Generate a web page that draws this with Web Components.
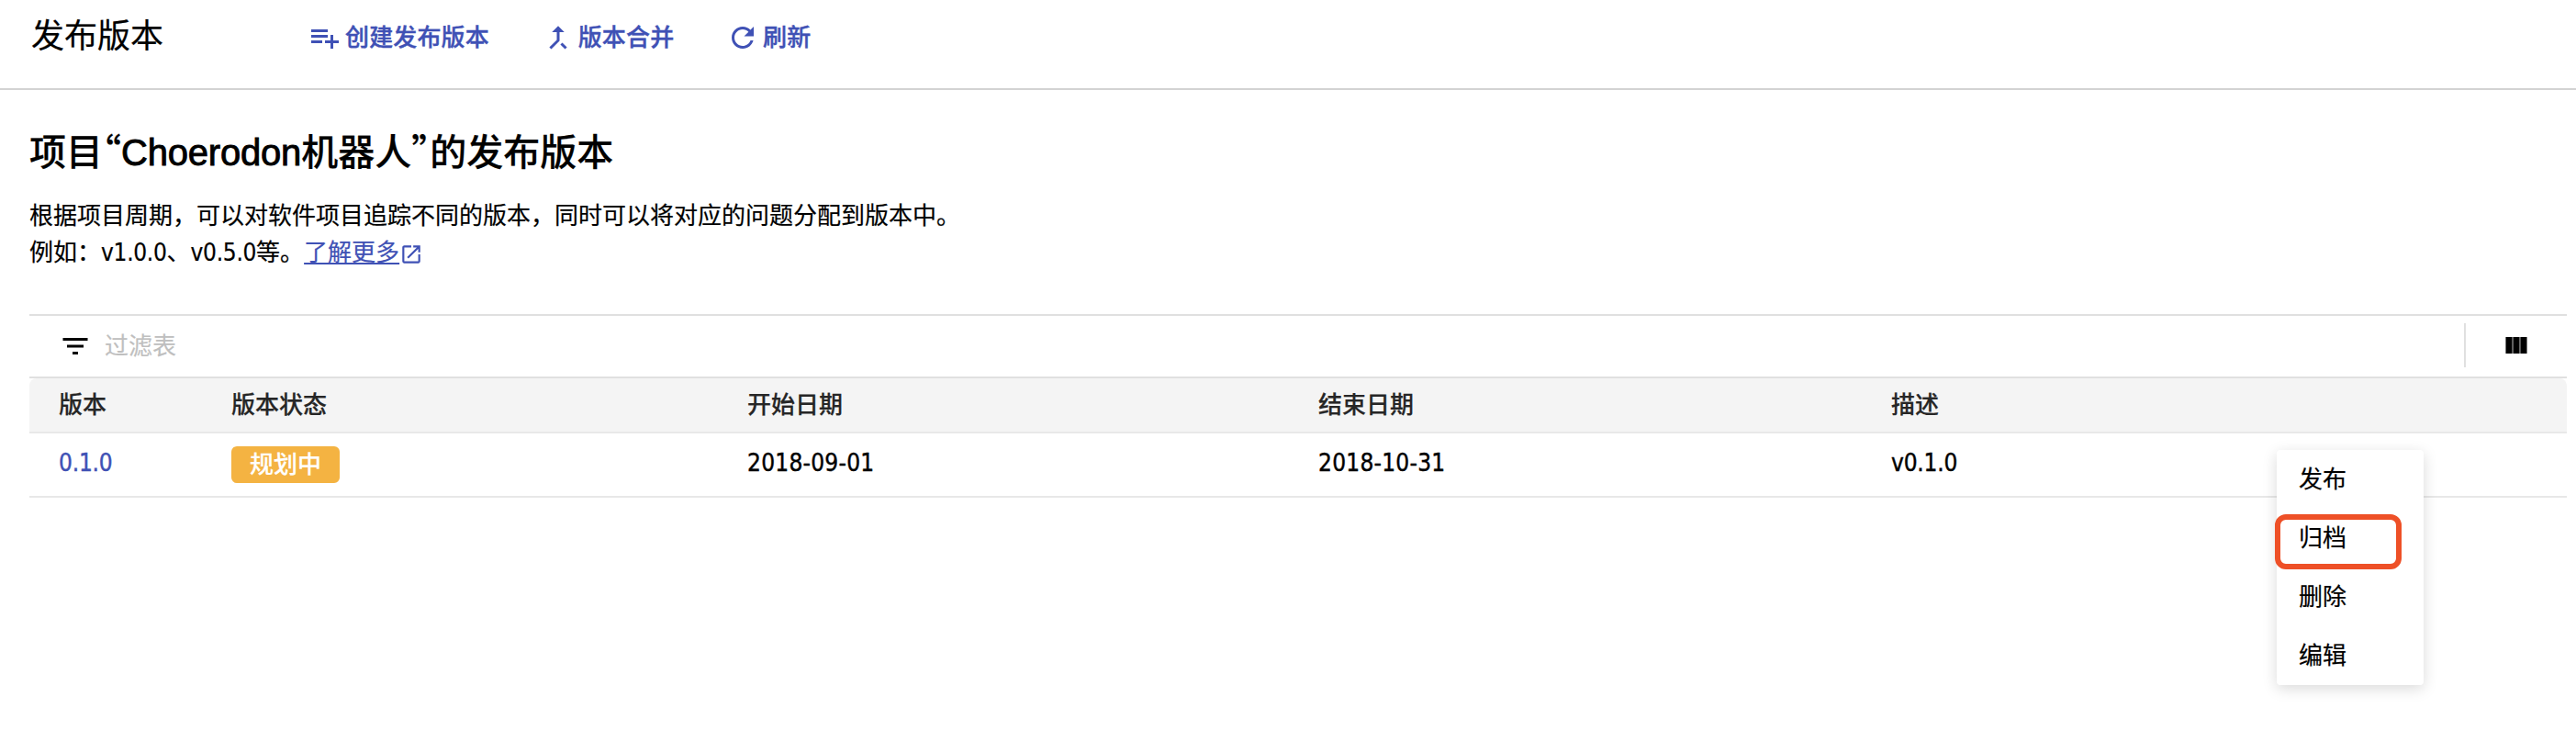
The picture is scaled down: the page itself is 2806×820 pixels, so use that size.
<!DOCTYPE html>
<html lang="zh-CN">
<head>
<meta charset="utf-8">
<title>发布版本</title>
<style>
  body {
    margin: 0; width: 2806px; height: 820px; background: #fff; color: #000; overflow: hidden;
    font-family: "DejaVu Sans Condensed", "Noto Sans CJK SC", sans-serif; font-size: 26px; line-height: 40px;
    -webkit-text-stroke: .2px;
  }
</style>
</head>
<body>
<release-page></release-page>
<script>
const define = (name, html) => customElements.define(name, class extends HTMLElement {
  constructor() {
    super();
    this.attachShadow({ mode: 'open' }).innerHTML = html;
  }
});

const ICONS = {
  playlist: 'M14 10H2v2h12v-2zm0-4H2v2h12V6zm4 8v-4h-2v4h-4v2h4v4h2v-4h4v-2h-4zM2 16h8v-2H2v2z',
  merge: 'M17 20.41L18.41 19 15 15.59 13.59 17 17 20.41zM7.5 8H11v5.59L5.59 19 7 20.41l6-6V8h3.5L12 3.5 7.5 8z',
  refresh: 'M17.65 6.35C16.2 4.9 14.21 4 12 4c-4.42 0-7.99 3.58-7.99 8s3.57 8 7.99 8c3.73 0 6.84-2.55 7.73-6h-2.08c-.82 2.33-3.04 4-5.65 4-3.31 0-6-2.69-6-6s2.69-6 6-6c1.66 0 3.14.69 4.22 1.78L13 11h7V4l-2.35 2.35z',
  open: 'M19 19H5V5h7V3H5c-1.11 0-2 .9-2 2v14c0 1.1.89 2 2 2h14c1.1 0 2-.9 2-2v-7h-2v7zM14 3v2h3.59l-9.83 9.83 1.41 1.41L19 6.41V10h2V3h-7z',
  filter: 'M10 18h4v-2h-4v2zM3 6v2h18V6H3zm3 7h12v-2H6v2z',
  columns: 'M4.3 6h4.8v12H4.3zM9.6 6h4.8v12H9.6zM14.9 6h4.8v12h-4.8z'
};

customElements.define('md-icon', class extends HTMLElement {
  connectedCallback() {
    if (this.shadowRoot) return;
    this.attachShadow({ mode: 'open' }).innerHTML = `
      <style>:host{display:block;flex:none;width:36px;height:36px}svg{display:block;width:100%;height:100%;fill:currentColor}</style>
      <svg viewBox="0 0 24 24"><path d="${ICONS[this.getAttribute('name')]}"/></svg>`;
  }
});

define('tool-button', `
  <style>
    :host{display:flex;align-items:center;gap:4px;height:36px;color:#3f51b5;font-weight:500;white-space:nowrap;-webkit-text-stroke:.4px}
    span{letter-spacing:.15px}
  </style>
  <slot name="icon"></slot><span><slot></slot></span>`);

define('page-header', `
  <style>
    :host{display:flex;box-sizing:border-box;height:98px;padding:0 34px;border-bottom:2px solid #d3d3d3}
    h1{margin:0;width:302px;font-size:36px;font-weight:400;line-height:80px}
    nav{display:flex;gap:56.8px;padding-top:23px}
  </style>
  <h1>发布版本</h1>
  <nav>
    <tool-button><md-icon slot="icon" name="playlist"></md-icon>创建发布版本</tool-button>
    <tool-button><md-icon slot="icon" name="merge"></md-icon>版本合并</tool-button>
    <tool-button><md-icon slot="icon" name="refresh"></md-icon>刷新</tool-button>
  </nav>`);

define('page-intro', `
  <style>
    :host{display:block;height:244px;padding:0 32px;box-sizing:border-box}
    h2{margin:0;padding-top:36px;height:60px;font:500 40px/58px "Noto Sans CJK SC",sans-serif;white-space:nowrap}
    .q{font-feature-settings:"halt"}
    .l{font-family:"Liberation Sans",sans-serif;line-height:0;letter-spacing:-.2px;-webkit-text-stroke:.9px}
    p{margin:21px 0 0;display:flex;flex-direction:column}
    p > span{display:flex;align-items:center;height:40px;white-space:nowrap}
    .n{letter-spacing:-.3px}
    a{display:flex;align-items:center;color:#3f51b5}
    u{text-decoration-thickness:2px;text-underline-offset:2px;text-decoration-skip-ink:none}
    md-icon{width:26px;height:26px;margin-top:3px}
  </style>
  <h2>项目<span class="q">“</span><span class="l">Choerodon</span>机器人<span class="q">”</span>的发布版本</h2>
  <p><span>根据项目周期，可以对软件项目追踪不同的版本，同时可以将对应的问题分配到版本中。</span>
  <span>例如：<span class="n">v1.0.0</span>、<span class="n">v0.5.0</span>等。<a><u>了解更多</u><md-icon name="open"></md-icon></a></span></p>`);

define('filter-bar', `
  <style>
    :host{display:flex;align-items:center;height:66px;border-top:2px solid #e0e0e0;border-bottom:2px solid #e0e0e0;padding:0 0 0 32px}
    span{margin-left:14px;color:#bfbfbf;flex:1}
    .cols{display:flex;align-items:center;height:48px;width:112px;box-sizing:border-box;border-left:2px solid #e0e0e0;padding-left:37px;margin-bottom:2px}
  </style>
  <md-icon name="filter"></md-icon><span>过滤表</span>
  <div class="cols"><md-icon name="columns"></md-icon></div>`);

define('table-row', `
  <style>
    :host{display:grid;grid-template-columns:188px 562px 622px 624px 1fr;align-items:center;height:68px;padding-left:32px;border-bottom:2px solid #e8e8e8}
    :host([head]){height:58px;background:#f4f4f4;color:#262626;font-weight:500;border-radius:8px 8px 0 0}
  </style>
  <slot></slot>`);

define('status-tag', `
  <style>
    :host{display:block;width:118px;height:40px;line-height:41px;border-radius:6px;background:#f4b342;color:#fff;font-weight:500;text-align:center}
  </style>
  <slot></slot>`);

define('version-table', `
  <style>
    :host{display:block;margin:0 10px 0 32px}
    .id{color:#3f51b5}
    .n,.v{margin-bottom:4px;-webkit-text-stroke:.4px}
    .n{letter-spacing:.25px}
    .v{letter-spacing:-.2px}
  </style>
  <filter-bar></filter-bar>
  <table-row head><span>版本</span><span>版本状态</span><span>开始日期</span><span>结束日期</span><span>描述</span></table-row>
  <table-row><span class="id v">0.1.0</span><status-tag>规划中</status-tag><span class="n">2018-09-01</span><span class="n">2018-10-31</span><span class="v">v0.1.0</span></table-row>`);

define('action-menu', `
  <style>
    :host{display:block;position:absolute;left:2480px;top:490px;width:160px;background:#fff;border-radius:4px;box-shadow:0 4px 16px rgba(0,0,0,.15)}
    div{height:64px;line-height:64px;padding-left:24px}
    .mark{position:absolute;left:-2.5px;top:69.5px;width:138px;height:60px;box-sizing:border-box;border:6px solid #ee5027;border-radius:12px}
  </style>
  <div>发布</div><div>归档</div><div>删除</div><div>编辑</div>
  <i class="mark"></i>`);

define('release-page', `
  <style>:host{display:block;position:relative;height:820px}</style>
  <page-header></page-header>
  <page-intro></page-intro>
  <version-table></version-table>
  <action-menu></action-menu>`);
</script>
</body>
</html>
